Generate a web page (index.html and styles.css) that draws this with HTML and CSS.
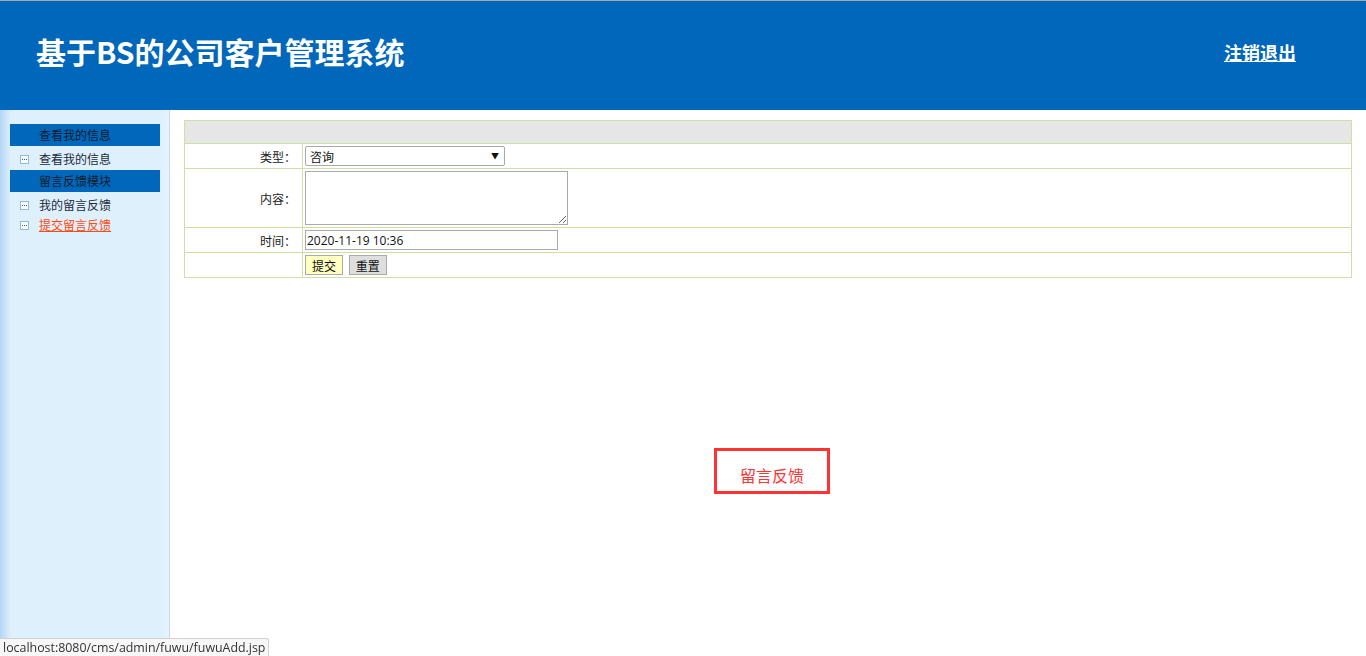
FILE: index.html
```
<!DOCTYPE html>
<html lang="zh-CN">
<head>
    <meta charset="UTF-8">
    <title>基于BS的公司客户管理系统</title>
    <link rel="stylesheet" href="styles.css">
</head>
<body>
    <div class="header">
        <div class="logo">基于BS的公司客户管理系统</div>
        <a class="logout" href="#">注销退出</a>
    </div>

    <div class="wrap">
        <div class="sidebar">
            <div class="menu-title">查看我的信息</div>
            <ul class="menu">
                <li><span class="dot-icon"><svg width="9" height="9" viewBox="0 0 9 9"><rect x="0.5" y="0.5" width="8" height="8" fill="#fff" stroke="#8cbbe6"/><rect x="2" y="4" width="1" height="1" fill="#1a5fa8"/><rect x="4" y="4" width="1" height="1" fill="#1a5fa8"/><rect x="6" y="4" width="1" height="1" fill="#1a5fa8"/></svg></span><a href="#">查看我的信息</a></li>
            </ul>
            <div class="menu-title">留言反馈模块</div>
            <ul class="menu">
                <li><span class="dot-icon"><svg width="9" height="9" viewBox="0 0 9 9"><rect x="0.5" y="0.5" width="8" height="8" fill="#fff" stroke="#8cbbe6"/><rect x="2" y="4" width="1" height="1" fill="#1a5fa8"/><rect x="4" y="4" width="1" height="1" fill="#1a5fa8"/><rect x="6" y="4" width="1" height="1" fill="#1a5fa8"/></svg></span><a href="#">我的留言反馈</a></li>
                <li><span class="dot-icon"><svg width="9" height="9" viewBox="0 0 9 9"><rect x="0.5" y="0.5" width="8" height="8" fill="#fff" stroke="#8cbbe6"/><rect x="2" y="4" width="1" height="1" fill="#1a5fa8"/><rect x="4" y="4" width="1" height="1" fill="#1a5fa8"/><rect x="6" y="4" width="1" height="1" fill="#1a5fa8"/></svg></span><a href="#" class="current">提交留言反馈</a></li>
            </ul>
        </div>

        <div class="main">
            <table class="form-table">
                <tr class="head-row"><td colspan="2"></td></tr>
                <tr class="row-type">
                    <td class="label">类型：</td>
                    <td>
                        <div class="select-box">
                            <select>
                                <option>咨询</option>
                                <option>建议</option>
                                <option>投诉</option>
                            </select>
                        </div>
                    </td>
                </tr>
                <tr class="row-content">
                    <td class="label">内容：</td>
                    <td><textarea></textarea></td>
                </tr>
                <tr class="row-time">
                    <td class="label">时间：</td>
                    <td><input type="text" value="2020-11-19 10:36"></td>
                </tr>
                <tr class="row-btn">
                    <td class="label"></td>
                    <td>
                        <button class="btn btn-submit">提交</button>
                        <button class="btn btn-reset">重置</button>
                    </td>
                </tr>
            </table>

            <div class="notice">留言反馈</div>
        </div>
    </div>

    <div class="status-bar">localhost:8080/cms/admin/fuwu/fuwuAdd.jsp</div>
</body>
</html>
```

FILE: styles.css
```
body {
    margin: 0;
    font-family: "Noto Sans CJK SC", "Microsoft YaHei", sans-serif;
    font-size: 12px;
    color: #222;
    background: #fff;
}

.header {
    height: 109px;
    border-top: 1px solid #a8a8a8;
    background: #0067bb;
    display: flex;
    align-items: center;
    justify-content: space-between;
    padding: 0 70px 0 36px;
}

.logo {
    color: #fff;
    font-size: 30px;
    font-weight: bold;
    margin-top: -10px;
}

.logout {
    color: #fff;
    font-size: 18px;
    font-weight: bold;
    text-decoration: underline;
    margin-top: -7px;
}

.wrap {
    display: flex;
    min-height: calc(100vh - 110px);
}

/* left menu */
.sidebar {
    width: 170px;
    flex-shrink: 0;
    border-right: 1px solid #c5dcef;
    background: linear-gradient(to right, #b3d6f5 0px, #dff0fd 11px, #dff0fd 162px, #e8f4fe 169px);
    padding-top: 14px;
    box-sizing: border-box;
}

.menu-title {
    margin-left: 10px;
    width: 150px;
    height: 22px;
    line-height: 22px;
    background: #0067bb;
    color: #0d1a2a;
    padding-left: 29px;
    box-sizing: border-box;
}

.menu {
    list-style: none;
    margin: 0;
    padding: 3px 0 1px;
}

.menu li {
    height: 20px;
    line-height: 20px;
    display: flex;
    align-items: center;
    padding-left: 20px;
}

.dot-icon {
    width: 9px;
    height: 9px;
    display: flex;
    margin-right: 10px;
}

.menu a {
    color: #1b2a3a;
    text-decoration: none;
}

.menu a.current {
    color: #ff4a0d;
    text-decoration: underline;
}

/* main area */
.main {
    flex: 1;
    padding: 10px 14px;
}

.form-table {
    width: 100%;
    border-collapse: collapse;
    border: 1px solid #cddea8;
}

.form-table td {
    border: 1px solid #cddea8;
    padding: 0 2px;
}

.head-row td {
    height: 22px;
    background: #e6e6e6;
}

.form-table td.label {
    width: 109px;
    text-align: right;
    padding-right: 6px;
}

.row-type td { height: 24px; }
.row-content td { height: 58px; }
.row-time td { height: 24px; }
.row-btn td { height: 24px; }

.select-box {
    position: relative;
    width: 200px;
    height: 20px;
}

.select-box select {
    appearance: none;
    width: 200px;
    height: 20px;
    border: 1px solid #a9a9a9;
    border-radius: 2px;
    background: #fff;
    font-family: inherit;
    font-size: 12px;
    padding: 0 4px;
    color: #111;
    display: block;
}

.select-box::after {
    content: "▼";
    position: absolute;
    right: 6px;
    top: 4px;
    font-size: 8px;
    color: #111;
    pointer-events: none;
}

textarea {
    display: block;
    width: 263px;
    height: 54px;
    box-sizing: border-box;
    border: 1px solid #a9a9a9;
    resize: both;
    margin: 0;
}

input[type="text"] {
    display: block;
    width: 253px;
    height: 20px;
    box-sizing: border-box;
    border: 1px solid #a9a9a9;
    font-family: "Open Sans", "Noto Sans CJK SC", sans-serif;
    font-size: 12px;
    padding: 0 1px;
    margin: 0;
    color: #111;
}

.btn {
    width: 38px;
    height: 20px;
    border: 1px solid #a9a9a9;
    font-family: inherit;
    font-size: 12px;
    padding: 0;
    color: #111;
    vertical-align: middle;
}

.btn-submit {
    background: #ffffc0;
}

.btn-reset {
    background: #dedede;
    margin-left: 3px;
}

.notice {
    width: 110px;
    height: 32px;
    line-height: 32px;
    padding-top: 8px;
    border: 3px solid #ff3333;
    color: #ff3333;
    font-size: 16px;
    text-align: center;
    margin: 170px 0 0 calc(50% - 54px);
}

.status-bar {
    position: fixed;
    left: 0;
    bottom: 0;
    height: 17px;
    line-height: 17px;
    padding: 0 3px;
    background: #f7f7f7;
    border: 1px solid #d0d0d0;
    border-left: none;
    border-bottom: none;
    border-top-right-radius: 3px;
    font-family: "Open Sans", "Noto Sans", sans-serif;
    font-size: 12.4px;
    color: #333;
}
```
